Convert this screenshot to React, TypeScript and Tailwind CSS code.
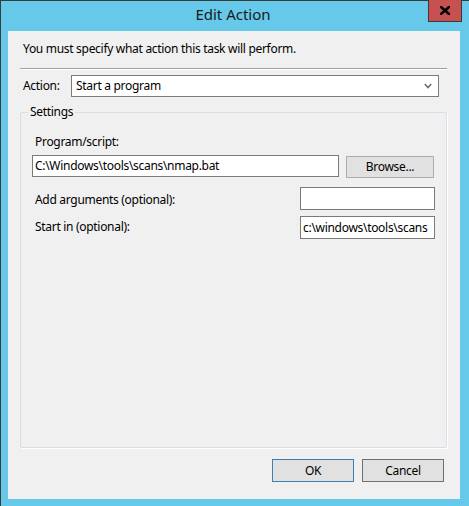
import React from "react";

const font = { fontFamily: '"Noto Sans", "Open Sans", sans-serif' };

function Input({ value, className }: { value?: string; className: string }) {
  return (
    <div
      className={`bg-white border border-[#7a7a7a] flex items-center pl-[2px] text-[12px] leading-[16px] text-[#000] whitespace-nowrap overflow-hidden ${className}`}
    >
      {value}
    </div>
  );
}

export default function App() {
  return (
    <div
      className="w-[469px] h-[506px] bg-[#66c9ea] border-l border-t border-[#3a3a3a] flex flex-col text-[#000] text-[12px] leading-[16px] tracking-[-0.3px]"
      style={font}
    >
      {/* title bar */}
      <div className="relative h-[30px] flex items-center justify-center">
        <span className="text-[15px] leading-[20px] text-[#1a1a1a] -mt-[4px] ml-[-4px] tracking-normal">Edit Action</span>
        <div className="absolute top-[-1px] left-[427px] w-[34px] h-[22px] bg-[#c75050] border border-t-0 border-[#3a3a3a] flex items-center justify-center">
          <svg width="10" height="9" viewBox="0 0 10 9">
            <path d="M1 1 L9 8 M9 1 L1 8" stroke="#000" strokeWidth="2.6" strokeLinecap="square" />
          </svg>
        </div>
      </div>
      {/* client */}
      <div className="ml-[7px] w-[452px] h-[468px] bg-[#f0f0f0] flex flex-col">
        <div className="mt-[10px] ml-[15px] h-[16px] whitespace-nowrap">
          You must specify what action this task will perform.
        </div>
        <div className="mt-[11px] ml-[12px] w-[427px] h-[2px] border-t border-b border-t-[#a0a0a0] border-b-white" />
        <div className="mt-[5px] ml-[12px] flex items-center h-[22px]">
          <span className="ml-[3px] w-[48px]">Action:</span>
          <div className="w-[368px] h-[22px] bg-white border border-[#7a7a7a] flex items-center justify-between pl-[4px] pr-[6px]">
            <span>Start a program</span>
            <svg width="8" height="6" viewBox="0 0 8 6">
              <path d="M0.8 1 L4 4.5 L7.2 1" stroke="#6d6d6d" strokeWidth="1.6" fill="none" />
            </svg>
          </div>
        </div>
        {/* group box */}
        <div className="relative mt-[15px] ml-[12px] w-[427px] h-[336px] border border-[#d5dfe5] rounded-[2px] shadow-[1px_1px_0_#ffffff] flex flex-col pl-[11px]">
          <span className="absolute top-[-9px] left-[7px] px-[2px] bg-[#f0f0f0]">Settings</span>
          <div className="mt-[21px] ml-[3px] h-[16px]">Program/script:</div>
          <div className="mt-[5px] flex items-start">
            <Input className="w-[307px] h-[22px]" value="C:\Windows\tools\scans\nmap.bat" />
            <div className="ml-[7px] mt-[1px] w-[88px] h-[22px] bg-[#e1e1e1] border border-[#adadad] flex items-center justify-center">
              Browse...
            </div>
          </div>
          <div className="mt-[9px] flex items-center justify-between w-[403px]">
            <span className="ml-[3px] mt-[2px]">Add arguments (optional):</span>
            <Input className="w-[135px] h-[23px]" />
          </div>
          <div className="mt-[6px] flex items-center justify-between w-[403px]">
            <span className="ml-[3px] mt-[-2px]">Start in (optional):</span>
            <Input className="w-[135px] h-[23px]" value="c:\windows\tools\scans" />
          </div>
        </div>
        <div className="mt-[11px] mr-[16px] flex justify-end gap-[8px]">
          <div className="w-[82px] h-[23px] bg-[#e1e1e1] border border-[#3c7fb1] flex items-center justify-center">
            OK
          </div>
          <div className="w-[82px] h-[23px] bg-[#e1e1e1] border border-[#707070] flex items-center justify-center">
            Cancel
          </div>
        </div>
      </div>
    </div>
  );
}
